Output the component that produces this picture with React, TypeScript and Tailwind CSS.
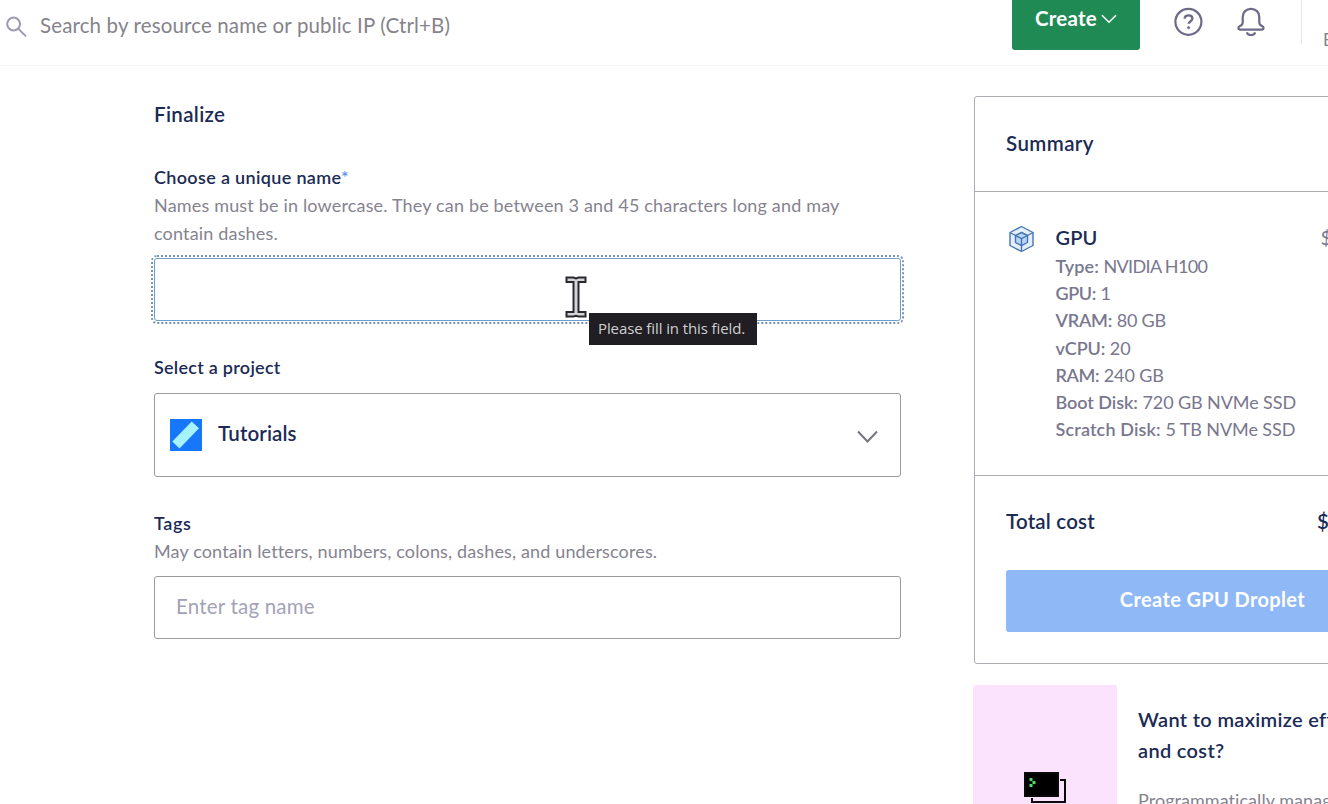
import React from "react";

const specs = [
  { label: "Type:", value: "NVIDIA H100", labelCls: "tracking-[0.1px]", valueCls: "tracking-[-0.65px]" },
  { label: "GPU:", value: "1", labelCls: "tracking-[-0.4px]", valueCls: "" },
  { label: "VRAM:", value: "80 GB", labelCls: "tracking-[-0.2px]", valueCls: "tracking-[-0.2px]" },
  { label: "vCPU:", value: "20", labelCls: "tracking-[-0.1px]", valueCls: "" },
  { label: "RAM:", value: "240 GB", labelCls: "tracking-[-0.4px]", valueCls: "tracking-[-0.1px]" },
  { label: "Boot Disk:", value: "720 GB NVMe SSD", labelCls: "tracking-[-0.05px]", valueCls: "tracking-[-0.1px]" },
  { label: "Scratch Disk:", value: "5 TB NVMe SSD", labelCls: "tracking-[0.15px]", valueCls: "tracking-[-0.1px]" },
];

function Header() {
  return (
    <header className="flex h-[66px] shrink-0 items-start border-b border-[#f5f3f8]">
      <div className="flex flex-1 items-start pl-[5px] pt-[10px]">
        <svg width="23" height="23" viewBox="0 0 23 23" fill="none" stroke="#9c99b3" strokeWidth="2" className="mt-[5px]">
          <circle cx="8.6" cy="9" r="6.4" />
          <path d="M13.2 13.6 21 21.400" />
        </svg>
        <span className="ml-3 text-[20.5px] leading-[30px] tracking-[0.14px] text-[#85838b]">
          Search by resource name or public IP (Ctrl+B)
        </span>
      </div>
      <button className="flex h-[50px] w-32 items-start rounded-b-[3px] bg-[#1f8a53] pl-[23px] pt-[3px] text-white">
        <span className="text-[20.5px] font-bold leading-[30px] tracking-[0.2px]">Create</span>
        <svg width="16" height="10" viewBox="0 0 16 10" fill="none" stroke="white" strokeWidth="1.6" className="ml-1 mt-[11px]">
          <path d="M1 1.2 8 8.2 15 1.2" />
        </svg>
      </button>
      <svg width="30" height="30" viewBox="0 0 30 30" fill="none" stroke="#6c6a87" strokeWidth="2.200" className="ml-[33px] mt-[7px]">
        <circle cx="15.400" cy="14.800" r="13" />
        <path d="M11.600 11.600c.2-2 1.700-3.200 3.900-3.200s3.900 1.200 3.900 3.200c0 2.600-3.700 2.500-3.700 5.200" strokeWidth="2.400" />
        <circle cx="15.600" cy="20.700" r="1.100" fill="#6c6a87" strokeWidth=".8" />
      </svg>
      <svg width="30" height="32" viewBox="0 0 30 32" fill="none" stroke="#6c6a87" strokeWidth="2.200" strokeLinejoin="round" className="ml-[33px] mt-[6px]">
        <path d="M15 2.800c-4.900 0-8.300 3.500-8.300 8.200v5.600c0 1.700-.8 2.800-2.800 3.500-2 .8-2 3.500.3 3.500h21.600c2.300 0 2.300-2.700.3-3.500-2-.7-2.800-1.800-2.800-3.500V11c0-4.700-3.400-8.200-8.300-8.200Z" />
        <path d="M10.800 26.300c.6 1.900 2.200 2.700 4.200 2.700s3.600-.8 4.200-2.700" />
      </svg>
      <div className="ml-[35px] h-11 w-px bg-[#e7e4ec]" />
      <div className="w-[26px] overflow-hidden pl-[21px] pt-[30px] text-[17px] leading-5 text-[#85838f]">E</div>
    </header>
  );
}

function Cursor() {
  return (
    <svg width="22" height="42" viewBox="0 0 22 42" className="absolute left-[410px] top-[17px]" fill="#d4d4d8" stroke="#29292c" strokeWidth="2">
      <path d="M1.500 1.500h7l2.500 1 2.500-1h7v4.500h-7v30h7v4.500h-7l-2.500-.7-2.500.7h-7v-4.500h7v-30h-7z" />
    </svg>
  );
}

function FinalizeForm() {
  return (
    <section className="w-[747px] shrink-0 pt-[34px] text-[#1b2b55]">
      <h2 className="text-[20.5px] font-semibold leading-7 tracking-[0.35px]">Finalize</h2>
      <label className="mt-[35px] block text-lg font-semibold leading-7 tracking-[0.34px]">
        Choose a unique name<span className="text-[#5b95ea]">*</span>
      </label>
      <p className="whitespace-nowrap text-lg leading-7 tracking-[0.17px] text-[#85838f]">
        Names must be in lowercase. They can be between 3 and 45 characters long and may
        <br />
        contain dashes.
      </p>
      <div className="relative mt-[11px] h-[63px] rounded-[3px] border border-[#6f9ccb] outline-2 outline-offset-1 outline-dotted outline-[#7795b5]">
        <Cursor />
        <div className="absolute left-[434px] top-[54px] flex h-8 w-[168px] items-center bg-[#201e22] pb-[2px] pl-[9px] font-['Open_Sans',sans-serif] text-[15px] tracking-[-0.1px] whitespace-nowrap text-[#cfced1]">
          Please fill in this field.
        </div>
      </div>
      <label className="mt-8 block text-lg font-semibold leading-7 tracking-[0.26px]">Select a project</label>
      <div className="mt-3 flex h-[84px] items-center rounded-[3px] border border-[#9b9a9f] pl-[15px] pr-[21px]">
        <svg width="32" height="32" viewBox="0 0 32 32" className="-mt-px">
          <rect width="32" height="32" fill="#1677fb" />
          <path d="M21.700 2.500 29 9.300 9.500 29.500 2.300 22.400Z" fill="#a5f3fd" />
        </svg>
        <span className="ml-4 flex-1 pb-[4px] text-[20.5px] font-semibold leading-7 tracking-[0.1px]">Tutorials</span>
        <svg width="23" height="14" viewBox="0 0 23 14" fill="none" stroke="#77767f" strokeWidth="2" className="mt-[3px]">
          <path d="M2 1.500 11.500 11.500 21 1.500" />
        </svg>
      </div>
      <label className="mt-8 block text-lg font-semibold leading-7 tracking-[0.6px]">Tags</label>
      <p className="text-lg leading-7 tracking-[0.14px] text-[#85838f]">
        May contain letters, numbers, colons, dashes, and underscores.
      </p>
      <div className="mt-[11px] flex h-[63px] items-center rounded-[3px] border border-[#9b9a9f] pb-[2px] pl-[21px] text-[20.5px] tracking-[0.2px] text-[#a3a2b6]">
        Enter tag name
      </div>
    </section>
  );
}

function Summary() {
  return (
    <div className="ml-px w-[476px] rounded-[3px] border border-[#adabb3] text-[#1b2b55]">
      <div className="flex h-[95px] items-center border-b border-[#adabb3] pb-[2px] pl-[31px] text-[20.5px] font-semibold tracking-[0.4px]">
        Summary
      </div>
      <div className="flex h-[284px] border-b border-[#adabb3] pl-[33px] pt-8">
        <svg width="27" height="28" viewBox="0 0 26 28" fill="#e4effc" stroke="#4674b3" strokeWidth="1.400" strokeLinejoin="round" className="mt-px shrink-0">
          <path d="M13 1.500 24.500 7.500v13L13 26.500 1.500 20.500v-13Z" />
          <path d="M1.500 7.500 7 10.500M24.500 7.500 19 10.500M13 20.700v5.800" fill="none" />
          <path d="M13 7.500 19 10.500v7L13 20.700 7 17.500v-7Z" fill="#b9d6f7" />
          <path d="M7 10.500 13 13.700l6-3.200M13 13.700v7" fill="none" />
        </svg>
        <div className="ml-[20.5px] w-[265px] shrink-0">
          <h3 className="text-xl font-semibold leading-[26px] tracking-[0.1px]">GPU</h3>
          <ul className="mt-[3px] whitespace-nowrap text-lg leading-[27.200px] text-[#78778e]">
            {specs.map((s) => (
              <li key={s.label} className="h-[27.200px]">
                <span className={"font-semibold " + s.labelCls}>{s.label}</span>{" "}
                <span className={s.valueCls}>{s.value}</span>
              </li>
            ))}
          </ul>
        </div>
        <span className="text-xl leading-[26px] text-[#78778e]">$</span>
      </div>
      <div className="pb-[31px] pl-[31px] pr-[31px] pt-[31px]">
        <div className="flex text-[20.5px] font-semibold leading-7">
          <span className="w-[311px] tracking-[0.2px]">Total cost</span>
          <span>$</span>
        </div>
        <button className="mt-[35px] flex h-[62px] w-full items-center justify-center rounded-[3px] bg-[#8fb8f6] pb-1 pl-px text-xl font-bold tracking-[0.37px] text-white">
          Create GPU Droplet
        </button>
      </div>
    </div>
  );
}

function Promo() {
  return (
    <div className="mt-[21px] flex h-[200px] w-[477px] shrink-0">
      <div className="flex w-36 shrink-0 justify-center rounded-tl-[4px] bg-[#fce3fd] pl-[2px] pt-[87px]">
        <svg width="44" height="34" viewBox="0 0 44 34" fill="none" stroke="#0a0a0a" strokeWidth="2">
          <rect x="1" y="1" width="33" height="23" fill="#000" />
          <path d="M36 8h5v22H8v-4" />
          <path d="M5.500 6h3v3h3v3h-3v3h-3v-3h3V9h-3z" fill="#4ade63" stroke="none" />
        </svg>
      </div>
      <div className="pl-[21px] pt-[19px]">
        <h3 className="whitespace-nowrap text-xl font-semibold leading-[31px] tracking-[0.33px] text-[#1b2b55]">
          Want to maximize efficiency
          <br />
          and cost?
        </h3>
        <p className="mt-[20px] whitespace-nowrap text-lg leading-7 tracking-[0.05px] text-[#85838f]">
          Programmatically manage
        </p>
      </div>
    </div>
  );
}

export default function App() {
  return (
    <div className="flex h-[804px] w-[1328px] flex-col overflow-hidden bg-white font-[Lato,sans-serif]">
      <Header />
      <main className="flex flex-1 overflow-hidden pl-[154px]">
        <FinalizeForm />
        <aside className="ml-[72px] flex flex-1 flex-col overflow-hidden pt-[30px]">
          <Summary />
          <Promo />
        </aside>
      </main>
    </div>
  );
}
